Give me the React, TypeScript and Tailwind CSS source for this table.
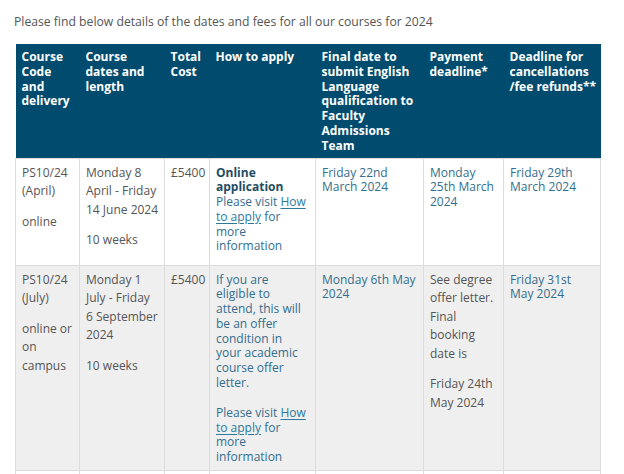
import React from "react";

const P = ({ children, className = "" }: { children: React.ReactNode; className?: string }) => (
  <p className={"leading-[18.5px] mb-[12px] last:mb-0 " + className}>{children}</p>
);

const Link = ({ children }: { children: React.ReactNode }) => (
  <span className="text-[#2b7a9c] underline underline-offset-2">{children}</span>
);

export default function App() {
  const td = "align-top border border-[#dcdcdc] pl-[6px] pr-[4px] pt-[5px] pb-[5px]";
  const th = "align-top text-left pl-[6px] pr-[4px] pt-[6px] leading-[14.8px] font-bold";
  const blue = "text-[#336e8e] leading-[14.8px]";
  return (
    <div className="w-[624px] h-[474px] overflow-hidden bg-white text-[12px] text-[#555] [font-family:'Open_Sans',sans-serif]">
      <p className="pl-[14px] pt-[14px] leading-[16px] h-[44px] text-[12.2px] text-[#555]">
        Please find below details of the dates and fees for all our courses for 2024
      </p>
      <table className="ml-[15px] w-[585px] table-fixed border-collapse">
        <colgroup>
          <col className="w-[64px]" />
          <col className="w-[85px]" />
          <col className="w-[45px]" />
          <col className="w-[106px]" />
          <col className="w-[108px]" />
          <col className="w-[80px]" />
          <col className="w-[97px]" />
        </colgroup>
        <thead>
          <tr className="bg-[#014c6e] text-white font-bold h-[114px]">
            <th className={th}>Course Code and delivery</th>
            <th className={th}>Course dates and length</th>
            <th className={th}>Total Cost</th>
            <th className={th}>How to apply</th>
            <th className={th}>Final date to submit English Language qualification to Faculty Admissions Team</th>
            <th className={th}>Payment deadline*</th>
            <th className={th + " pr-[0px]"}>Deadline for cancellations /fee refunds**</th>
          </tr>
        </thead>
        <tbody>
          <tr className="bg-white h-[107px]">
            <td className={td}>
              <P>PS10/24 (April)</P>
              <P>online</P>
            </td>
            <td className={td}>
              <P>Monday 8 April - Friday 14 June 2024</P>
              <P>10 weeks</P>
            </td>
            <td className={td}>
              <P>£5400</P>
            </td>
            <td className={td + " pt-[7px] " + blue}>
              <div className="font-bold text-[#1f4d63]">Online application</div>
              <div>
                Please visit <Link>How to apply</Link> for more information
              </div>
            </td>
            <td className={td + " pt-[7px] " + blue}>Friday 22nd March 2024</td>
            <td className={td + " pt-[7px] " + blue}>Monday 25th March 2024</td>
            <td className={td + " pt-[7px] " + blue}>Friday 29th March 2024</td>
          </tr>
          <tr className="bg-[#efefef] h-[204px]">
            <td className={td}>
              <P>PS10/24 (July)</P>
              <P>online or on campus</P>
            </td>
            <td className={td}>
              <P>
                Monday 1 July - Friday
                <br />6 September 2024
              </P>
              <P>10 weeks</P>
            </td>
            <td className={td}>
              <P>£5400</P>
            </td>
            <td className={td + " pt-[7px] pr-[8px] " + blue}>
              <div className="mb-[15px]">
                If you are eligible to attend, this will be an offer condition in your academic course offer letter.
              </div>
              <div>
                Please visit <Link>How to apply</Link> for more information
              </div>
            </td>
            <td className={td + " pt-[7px] " + blue}>Monday 6th May 2024</td>
            <td className={td}>
              <P>See degree offer letter. Final booking date is</P>
              <P>Friday 24th May 2024</P>
            </td>
            <td className={td + " pt-[7px] pr-[10px] " + blue}>Friday 31st May 2024</td>
          </tr>
          <tr className="bg-white h-[40px]">
            <td className={td}></td>
            <td className={td}></td>
            <td className={td}></td>
            <td className={td}></td>
            <td className={td}></td>
            <td className={td}></td>
            <td className={td}></td>
          </tr>
        </tbody>
      </table>
    </div>
  );
}
